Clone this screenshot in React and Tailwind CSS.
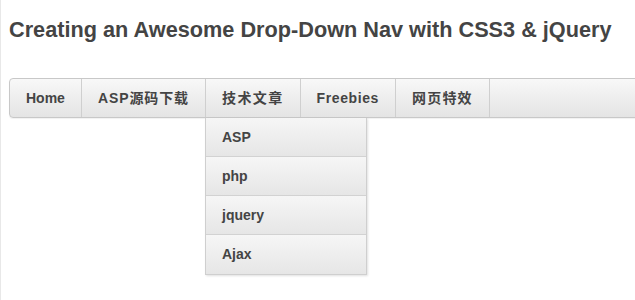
import React from 'react';

const navItems = [
  { label: 'Home', track: 'tracking-[0px]' },
  { label: 'ASP源码下载', track: 'tracking-[0.9px]' },
  { label: '技术文章', track: 'tracking-[1.4px]' },
  { label: 'Freebies', track: 'tracking-[0.6px]' },
  { label: '网页特效', track: 'tracking-[1.2px]' },
];
const subItems = ['ASP', 'php', 'jquery', 'Ajax'];

const font = { fontFamily: '"Liberation Sans", "Noto Sans CJK SC", sans-serif' };

export default function App() {
  return (
    <div className="min-h-[300px] w-[635px] overflow-hidden bg-white border-l border-[#e8e8e8]" style={font}>
      <div className="pl-2 pt-[16px]">
        <h1 className="text-[21.7px] font-bold text-[#444] leading-[28px]">
          Creating an Awesome Drop-Down Nav with CSS3 &amp; jQuery
        </h1>

        <nav className="relative mt-[34px] w-[700px]">
          <ul className="flex h-[40px] rounded-l-[4px] border border-[#c8c8c8] bg-gradient-to-b from-[#f8f8f8] to-[#e4e4e4] shadow-[0_1px_1px_rgba(0,0,0,0.06)]">
            {navItems.map((item) => (
              <li key={item.label} className="relative border-r border-[#cfcfcf]">
                <a className={`flex h-full items-center px-4 text-[14px] font-bold text-[#444] ${item.track}`}>
                  {item.label}
                </a>
                {item.label === '技术文章' && (
                  <ul className="absolute left-[-1px] top-[39px] w-[162px] border-r border-b border-l border-[#cfcfcf] bg-white shadow-[1px_1px_2px_rgba(0,0,0,0.12)]">
                    {subItems.map((sub, i) => (
                      <li
                        key={sub}
                        className={`h-[39px] flex items-center px-4 bg-gradient-to-b from-[#f6f6f6] to-[#e6e6e6] text-[14px] font-bold text-[#444] ${i < subItems.length - 1 ? 'border-b border-[#d2d2d2]' : ''}`}
                      >
                        {sub}
                      </li>
                    ))}
                  </ul>
                )}
              </li>
            ))}
          </ul>
        </nav>
      </div>
    </div>
  );
}
